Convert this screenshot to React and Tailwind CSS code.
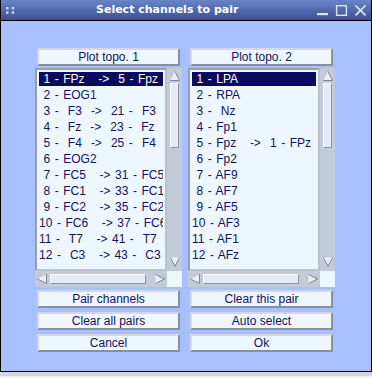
import React from "react";

const list1 = [
  " 1 - FPz   ->  5 - Fpz",
  " 2 - EOG1",
  " 3 -  F3  ->  21 -  F3",
  " 4 -  Fz  ->  23 -  Fz",
  " 5 -  F4  ->  25 -  F4",
  " 6 - EOG2",
  " 7 - FC5   -> 31 - FC5",
  " 8 - FC1   -> 33 - FC1",
  " 9 - FC2   -> 35 - FC2",
  "10 - FC6   -> 37 - FC6",
  "11 -  T7   -> 41 -  T7",
  "12 -  C3   -> 43 -  C3",
];

const list2 = [
  " 1 - LPA",
  " 2 - RPA",
  " 3 -  Nz",
  " 4 - Fp1",
  " 5 - Fpz   ->  1 - FPz",
  " 6 - Fp2",
  " 7 - AF9",
  " 8 - AF7",
  " 9 - AF5",
  "10 - AF3",
  "11 - AF1",
  "12 - AFz",
];

function Arrow({ dir }) {
  // little motif-style arrows for the scrollbars
  const pts = {
    up: "5,0.5 9.5,9.5 0.5,9.5",
    down: "0.5,0.5 9.5,0.5 5,9.5",
    left: "0.5,5 9.5,0.5 9.5,9.5",
    right: "0.5,0.5 9.5,5 0.5,9.5",
  }[dir];
  return (
    <svg width="10" height="10" viewBox="0 0 10 10">
      <polygon points={pts} fill="#e9eff9" stroke="#7d8596" strokeWidth="1" />
      {dir === "up" && <line x1="0.8" y1="9" x2="5" y2="0.9" stroke="#ffffff" />}
      {dir === "down" && <line x1="0.8" y1="0.8" x2="9.2" y2="0.8" stroke="#ffffff" />}
      {dir === "left" && <line x1="0.9" y1="5" x2="9" y2="0.9" stroke="#ffffff" />}
      {dir === "right" && <line x1="0.8" y1="0.8" x2="0.8" y2="9.2" stroke="#ffffff" />}
    </svg>
  );
}

function Button({ label }) {
  return (
    <div className="mx-[2px] h-[18px] flex items-center justify-center pb-[1px] bg-[#eef6ff] border-2 border-t-[#d3d8e2] border-l-[#d3d8e2] border-b-[#8a8f99] border-r-[#8a8f99] text-[12px] leading-[14px] text-[#10145a]">
      {label}
    </div>
  );
}

function ChannelList({ rows }) {
  return (
    <div className="flex flex-col">
      <div className="flex h-[203px]">
        <div className="w-[132px] h-full overflow-hidden bg-[#eef6ff] border-2 border-t-[#959dae] border-l-[#959dae] border-b-[#b9c1cf] border-r-[#b9c1cf] px-[2px] pt-[1px]">
          {rows.map((r, i) => (
            <div key={i} className="h-[16px] flex items-center">
              <div
                className={
                  i === 0
                    ? "w-full h-[14px] leading-[14px] whitespace-pre overflow-hidden bg-[#0b0b5e] text-white text-[12px] [word-spacing:1.2px]"
                    : "w-full h-[14px] leading-[14px] whitespace-pre overflow-hidden text-[#10145a] text-[12px] [word-spacing:1.2px]"
                }
              >
                {r}
              </div>
            </div>
          ))}
        </div>
        <div className="w-[15px] h-full flex flex-col bg-[#c4cbd8]">
          <div className="h-[15px] flex items-center justify-center">
            <Arrow dir="up" />
          </div>
          <div className="mx-[3px] h-[65px] bg-[#e4ebf6] border border-t-white border-l-white border-b-[#8c94a4] border-r-[#8c94a4]" />
          <div className="flex-1" />
          <div className="h-[14px] flex items-start justify-center">
            <Arrow dir="down" />
          </div>
        </div>
      </div>
      <div className="flex h-[16px]">
        <div className="w-[132px] h-full flex items-center bg-[#c4cbd8]">
          <div className="w-[14px] flex items-center justify-center">
            <Arrow dir="left" />
          </div>
          <div className="ml-[1px] w-[96px] h-[10px] bg-[#e4ebf6] border border-t-white border-l-white border-b-[#8c94a4] border-r-[#8c94a4]" />
          <div className="flex-1" />
          <div className="w-[14px] flex items-center justify-center">
            <Arrow dir="right" />
          </div>
        </div>
        <div className="w-[15px] h-full bg-[#eef6ff]" />
      </div>
    </div>
  );
}

export default function App() {
  return (
    <div className="w-[372px] h-[378px] flex flex-col overflow-hidden bg-white font-['Liberation_Sans',Arial,sans-serif]">
      <div className="h-[21px] shrink-0 flex items-center border-b border-x border-black bg-gradient-to-b from-[#6a84c8] to-[#3b5192]">
        <svg className="ml-[5px]" width="9" height="7" viewBox="0 0 9 7">
          <rect x="0" y="0" width="2.5" height="2.4" fill="#cdd8f2" />
          <rect x="5.7" y="0" width="2.5" height="2.4" fill="#cdd8f2" />
          <rect x="0" y="4.4" width="2.5" height="2.4" fill="#cdd8f2" />
          <rect x="5.7" y="4.4" width="2.5" height="2.4" fill="#cdd8f2" />
        </svg>
        <span className="ml-[81px] text-[11px] font-bold text-white font-['DejaVu_Sans',sans-serif]">
          Select channels to pair
        </span>
        <svg className="ml-auto mr-[4px]" width="50" height="11" viewBox="0 0 50 11">
          <rect x="0" y="8" width="11" height="2.2" fill="#dde4f6" />
          <rect x="19.6" y="0.7" width="9.8" height="9.6" fill="none" stroke="#dde4f6" strokeWidth="1.4" />
          <line x1="38.5" y1="0.5" x2="48.5" y2="10.3" stroke="#dde4f6" strokeWidth="1.7" />
          <line x1="48.5" y1="0.5" x2="38.5" y2="10.3" stroke="#dde4f6" strokeWidth="1.7" />
        </svg>
      </div>

      <div className="flex-1 bg-[#a8c0fd] border-x border-b border-black pt-[27px] pl-[34px]">
        <div className="flex gap-[6px]">
          <div className="w-[147px] flex flex-col">
            <Button label="Plot topo. 1" />
            <div className="mt-[2px]">
              <ChannelList rows={list1} />
            </div>
            <div className="mt-[3px] flex flex-col gap-[4px]">
              <Button label="Pair channels" />
              <Button label="Clear all pairs" />
              <Button label="Cancel" />
            </div>
          </div>
          <div className="w-[147px] flex flex-col">
            <Button label="Plot topo. 2" />
            <div className="mt-[2px]">
              <ChannelList rows={list2} />
            </div>
            <div className="mt-[3px] flex flex-col gap-[4px]">
              <Button label="Clear this pair" />
              <Button label="Auto select" />
              <Button label="Ok" />
            </div>
          </div>
        </div>
      </div>
      <div className="h-[4px] shrink-0 bg-[#d6d6d6]" />
      <div className="h-[2px] shrink-0 bg-[#f2f2f2]" />
    </div>
  );
}
